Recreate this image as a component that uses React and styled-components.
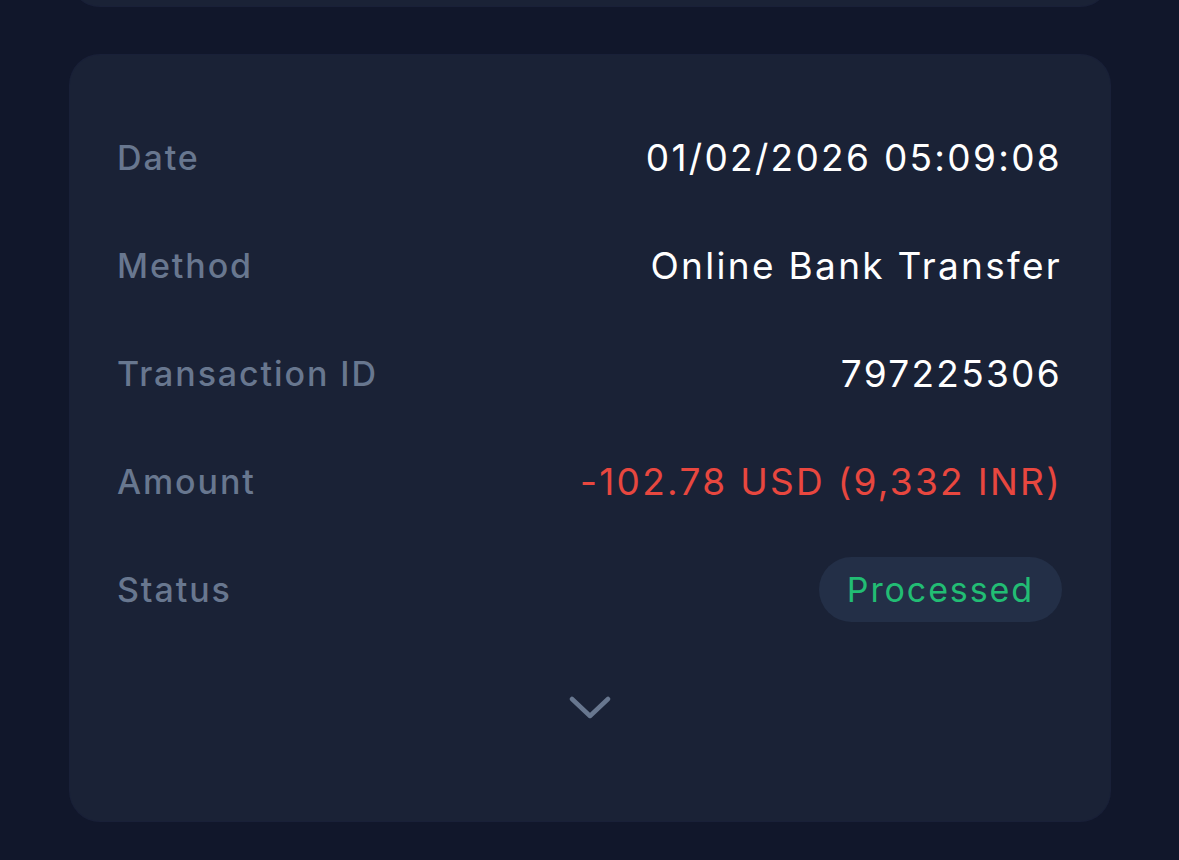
import React from 'react';
import styled, { createGlobalStyle } from 'styled-components';

const GlobalStyle = createGlobalStyle`
  html, body {
    margin: 0;
    padding: 0;
    background: #11172b;
    overflow: hidden;
  }
  body {
    font-family: Inter, "Noto Sans", sans-serif;
  }
`;

const Page = styled.div`
  width: 1179px;
  height: 860px;
  padding: 0 69px 0 70px;
  box-sizing: border-box;
  display: flex;
  flex-direction: column;
  gap: 49px;
  overflow: hidden;
`;

const Card = styled.div`
  background: #1a2236;
  border-radius: 30px;
  box-shadow: 0 0 0 1px rgba(40, 50, 80, 0.35);
`;

const PrevCard = styled(Card)`
  height: 66px;
  margin-top: -60px;
  flex-shrink: 0;
`;

const DetailsCard = styled(Card)`
  padding: 48px 48px 48px 47px;
  display: flex;
  flex-direction: column;
`;

const Row = styled.div`
  height: 108px;
  display: flex;
  align-items: center;
  justify-content: space-between;
`;

const Label = styled.span`
  font-size: 34px;
  font-weight: 500;
  color: #68778f;
  letter-spacing: 1.9px;
`;

const Value = styled.span`
  font-size: 37px;
  font-weight: 400;
  color: ${(p) => p.color || '#ffffff'};
  letter-spacing: 2.3px;
`;

const Badge = styled.span`
  display: inline-flex;
  align-items: center;
  height: 65px;
  padding: 0 28px;
  border-radius: 33px;
  background: #232f47;
  color: #22bd74;
  font-size: 34px;
  letter-spacing: 1.9px;
`;

const Toggle = styled.button`
  height: 130px;
  border: none;
  background: none;
  padding: 0;
  display: flex;
  align-items: center;
  justify-content: center;
  cursor: pointer;
`;

const Chevron = () => (
  <svg width="42" height="26" viewBox="0 0 42 26" fill="none">
    <path
      d="M3 4 L21 21 L39 4"
      stroke="#68778f"
      strokeWidth="4.5"
      strokeLinecap="round"
      strokeLinejoin="round"
    />
  </svg>
);

const rows = [
  { label: 'Date', value: '01/02/2026 05:09:08' },
  { label: 'Method', value: 'Online Bank Transfer' },
  { label: 'Transaction ID', value: '797225306' },
  { label: 'Amount', value: '-102.78 USD (9,332 INR)', color: '#e8473f' },
];

export default function App() {
  return (
    <>
      <GlobalStyle />
      <Page>
        <PrevCard />
        <DetailsCard>
          {rows.map((r) => (
            <Row key={r.label}>
              <Label>{r.label}</Label>
              <Value color={r.color}>{r.value}</Value>
            </Row>
          ))}
          <Row>
            <Label>Status</Label>
            <Badge>Processed</Badge>
          </Row>
          <Toggle aria-label="Show more">
            <Chevron />
          </Toggle>
        </DetailsCard>
      </Page>
    </>
  );
}
